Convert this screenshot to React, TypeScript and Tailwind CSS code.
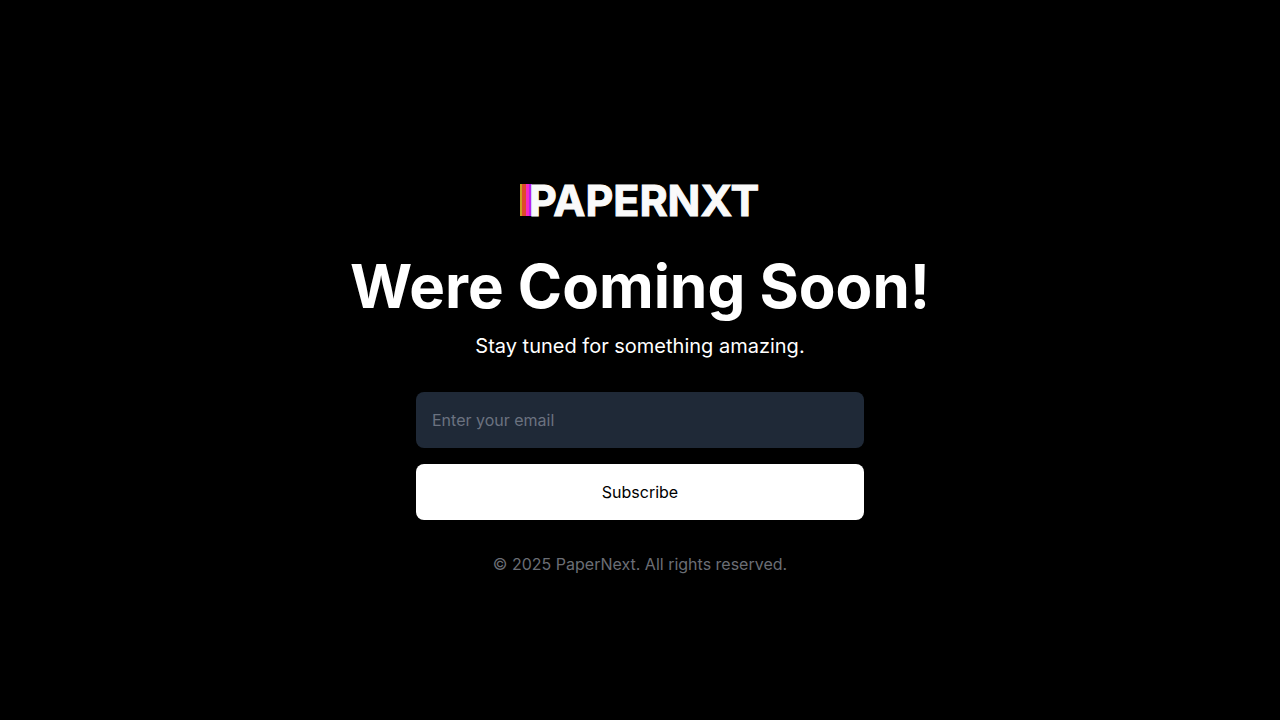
import { useState } from "react";

const Logo = () => (
  <svg viewBox="0 0 240 32" className="w-60 h-8 my-10 overflow-visible" role="img" aria-label="PaperNxt">
    <rect x="0" y="0" width="2" height="32" fill="#c8a022" />
    <rect x="2" y="0" width="4" height="32" fill="#df492c" />
    <rect x="6" y="0" width="3" height="32" fill="#f529c4" />
    <rect x="9" y="0" width="3" height="32" fill="#b31df0" />
    <text x="9" y="32" fontSize="43" fontWeight="700" fill="#fafafa" stroke="#fafafa" strokeWidth="1">
      PAPERNXT
    </text>
  </svg>
);

const App = () => {
  const [email, setEmail] = useState("");

  return (
    <main className="min-h-screen bg-black text-white flex flex-col items-center justify-center px-4 font-['Inter',sans-serif]">
      <Logo />
      <h1 className="text-6xl font-bold text-center">Were Coming Soon!</h1>
      <p className="text-xl text-center mt-4">Stay tuned for something amazing.</p>
      <form className="w-full max-w-md mt-8 flex flex-col gap-4" onSubmit={(e) => e.preventDefault()}>
        <input
          type="email"
          aria-label="Email address"
          placeholder="Enter your email"
          value={email}
          onChange={(e) => setEmail(e.target.value)}
          className="w-full p-4 rounded-lg bg-[#1f2937] text-white placeholder:text-[#6b7280]"
        />
        <button type="submit" className="w-full p-4 rounded-lg bg-white text-black">
          Subscribe
        </button>
      </form>
      <footer className="mt-8 text-center text-[#6b6e75]">
        © 2025 PaperNext. All rights reserved.
      </footer>
    </main>
  );
};

export default App;
